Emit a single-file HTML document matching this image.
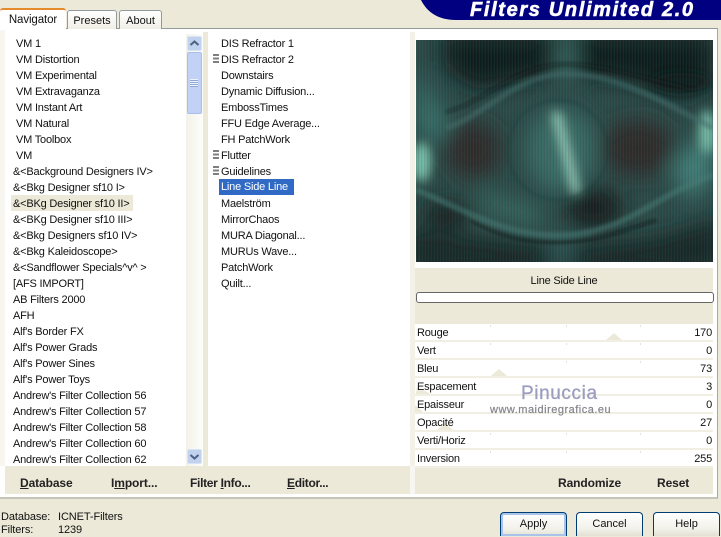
<!DOCTYPE html>
<html><head><meta charset="utf-8">
<style>
html,body{margin:0;padding:0}
body{width:721px;height:534px;position:relative;overflow:hidden;background:#ece9d8;font:11px "Liberation Sans",sans-serif;color:#111}
div{position:absolute;box-sizing:border-box}
.t{white-space:nowrap;line-height:16px;height:16px;letter-spacing:-.2px;margin-top:1px}
.b{font-weight:bold;font-size:12px;white-space:nowrap;line-height:16px;color:#222;margin-top:1px;letter-spacing:-.1px}
.row{left:415px;width:298px;height:16px;background:#fff}
.l{left:417px;line-height:16px;white-space:nowrap;margin-top:1px;letter-spacing:-.2px}
.v{right:9px;line-height:16px;text-align:right;margin-top:1px;letter-spacing:-.2px}
.tick{width:1px;height:2px;background:#e4e2d4}
.tri{width:0;height:0;border-left:8px solid transparent;border-right:8px solid transparent;border-bottom:7px solid #ece9d8}
.btn{height:24px;border:1px solid #003c74;border-radius:4px 4px 0 0;border-bottom:0;background:linear-gradient(#fff,#f2f1ea 70%,#e3e0d2);text-align:center;line-height:22px;font-size:11px}
.tab{border:1px solid #919b9c;border-bottom:0;border-radius:3px 3px 0 0;background:linear-gradient(#fff,#f0efe6);text-align:center;font-size:11px;line-height:20px}
.grip{left:213px;width:6px;height:9px;background:repeating-linear-gradient(#808080 0,#808080 2px,#fff 2px,#fff 3.5px)}
</style></head><body>

<svg style="position:absolute;left:400px;top:0" width="321" height="24"><path d="M21 0 C27 12 38 20 56 20 L321 20 L321 0 Z" fill="#000080"/></svg>
<div style="left:470px;top:-2px;font:italic bold 20px/24px 'Liberation Sans',sans-serif;color:#fff;letter-spacing:1.65px;white-space:nowrap;-webkit-text-stroke:.6px #fff">Filters Unlimited 2.0</div>

<div style="left:0;top:28px;width:718px;height:471px;background:#fff;border-top:1px solid #919b9c;border-right:1px solid #aca899;border-bottom:2px solid #c6c4b8"></div>

<div class="tab" style="left:67px;top:10px;width:50px;height:19px">Presets</div>
<div class="tab" style="left:119px;top:10px;width:43px;height:19px">About</div>
<div style="left:0;top:8px;width:66px;height:22px;background:#fff;border-top:2px solid #e68b2c;border-radius:3px 3px 0 0;text-align:center;font-size:11.5px;line-height:20px;letter-spacing:-.1px">Navigator</div>

<div style="left:0;top:30px;width:5px;height:436px;background:#f7f6f0"></div>
<div class="t" style="left:16px;top:35px">VM 1</div>
<div class="t" style="left:16px;top:51px">VM Distortion</div>
<div class="t" style="left:16px;top:67px">VM Experimental</div>
<div class="t" style="left:16px;top:83px">VM Extravaganza</div>
<div class="t" style="left:16px;top:99px">VM Instant Art</div>
<div class="t" style="left:16px;top:115px">VM Natural</div>
<div class="t" style="left:16px;top:131px">VM Toolbox</div>
<div class="t" style="left:16px;top:147px">VM</div>
<div class="t" style="left:13px;top:163px">&amp;&lt;Background Designers IV&gt;</div>
<div class="t" style="left:13px;top:179px">&amp;&lt;Bkg Designer sf10 I&gt;</div>
<div style="left:11px;top:195px;width:122px;height:16px;background:#ece9d8"></div>
<div class="t" style="left:13px;top:195px">&amp;&lt;BKg Designer sf10 II&gt;</div>
<div class="t" style="left:13px;top:211px">&amp;&lt;BKg Designer sf10 III&gt;</div>
<div class="t" style="left:13px;top:227px">&amp;&lt;Bkg Designers sf10 IV&gt;</div>
<div class="t" style="left:13px;top:243px">&amp;&lt;Bkg Kaleidoscope&gt;</div>
<div class="t" style="left:13px;top:259px">&amp;&lt;Sandflower Specials^v^ &gt;</div>
<div class="t" style="left:13px;top:275px">[AFS IMPORT]</div>
<div class="t" style="left:13px;top:291px">AB Filters 2000</div>
<div class="t" style="left:13px;top:307px">AFH</div>
<div class="t" style="left:13px;top:323px">Alf's Border FX</div>
<div class="t" style="left:13px;top:339px">Alf's Power Grads</div>
<div class="t" style="left:13px;top:355px">Alf's Power Sines</div>
<div class="t" style="left:13px;top:371px">Alf's Power Toys</div>
<div class="t" style="left:13px;top:387px">Andrew's Filter Collection 56</div>
<div class="t" style="left:13px;top:403px">Andrew's Filter Collection 57</div>
<div class="t" style="left:13px;top:419px">Andrew's Filter Collection 58</div>
<div class="t" style="left:13px;top:435px">Andrew's Filter Collection 60</div>
<div class="t" style="left:13px;top:451px">Andrew's Filter Collection 62</div>

<div style="left:186px;top:34px;width:17px;height:432px;background:linear-gradient(90deg,#f3f2ea,#fdfdfa)"></div>
<div style="left:203px;top:32px;width:5px;height:434px;background:#ece9d8"></div>
<div style="left:187px;top:36px;width:15px;height:15px;background:#c1d2ee;border:1px solid #d8e3f5;border-radius:2px"></div>
<svg style="position:absolute;left:187px;top:36px" width="15" height="15"><path d="M3.5 9 L7.5 5.5 L11.5 9" fill="none" stroke="#4d6185" stroke-width="2"/></svg>
<div style="left:187px;top:52px;width:15px;height:62px;background:#c1d2f6;border:1px solid #a9bfe6;border-radius:2px"></div>
<div style="left:190px;top:79px;width:8px;height:8px;background:repeating-linear-gradient(#eef3fc 0,#eef3fc 1px,#8fa8d8 1px,#8fa8d8 2px)"></div>
<div style="left:187px;top:449px;width:15px;height:15px;background:#c1d2ee;border:1px solid #d8e3f5;border-radius:2px"></div>
<svg style="position:absolute;left:187px;top:449px" width="15" height="15"><path d="M3.5 6 L7.5 9.5 L11.5 6" fill="none" stroke="#4d6185" stroke-width="2"/></svg>

<div class="t" style="left:221px;top:35px">DIS Refractor 1</div>
<div class="grip" style="top:54px"></div>
<div class="t" style="left:221px;top:51px">DIS Refractor 2</div>
<div class="t" style="left:221px;top:67px">Downstairs</div>
<div class="t" style="left:221px;top:83px">Dynamic Diffusion...</div>
<div class="t" style="left:221px;top:99px">EmbossTimes</div>
<div class="t" style="left:221px;top:115px">FFU Edge Average...</div>
<div class="t" style="left:221px;top:131px">FH PatchWork</div>
<div class="grip" style="top:150px"></div>
<div class="t" style="left:221px;top:147px">Flutter</div>
<div class="grip" style="top:166px"></div>
<div class="t" style="left:221px;top:163px">Guidelines</div>
<div style="left:219px;top:179px;width:75px;height:16px;background:#316ac5"></div>
<div class="t" style="left:221px;top:179px;color:#fff;margin-top:0;line-height:17px">Line Side Line</div>
<div class="t" style="left:221px;top:195px">Maelström</div>
<div class="t" style="left:221px;top:211px">MirrorChaos</div>
<div class="t" style="left:221px;top:227px">MURA Diagonal...</div>
<div class="t" style="left:221px;top:243px">MURUs Wave...</div>
<div class="t" style="left:221px;top:259px">PatchWork</div>
<div class="t" style="left:221px;top:275px">Quilt...</div>

<div style="left:410px;top:32px;width:5px;height:434px;background:#f4f2e8"></div>
<div style="left:5px;top:466px;width:405px;height:28px;background:#ece9d8"></div>
<div style="left:410px;top:466px;width:5px;height:28px;background:#f7f6f0"></div>

<svg style="position:absolute;left:416px;top:40px" width="297" height="222" viewBox="0 0 297 222">
<defs>
<filter id="a" x="-20%" y="-20%" width="140%" height="140%"><feGaussianBlur stdDeviation="10"/></filter>
<filter id="c" x="-20%" y="-20%" width="140%" height="140%"><feGaussianBlur stdDeviation="5"/></filter>
<filter id="d" x="-20%" y="-20%" width="140%" height="140%"><feGaussianBlur stdDeviation="1.5"/></filter>
<pattern id="p" width="3" height="4" patternUnits="userSpaceOnUse"><rect width="1" height="4" x="0" fill="#3f8c80" opacity=".12"/><rect width="1" height="4" x="2" fill="#4a2a2a" opacity=".14"/></pattern>
</defs>
<rect width="297" height="222" fill="#2b4a48"/>
<g filter="url(#a)">
<path d="M25 -5 L297 -5 L297 42 L270 60 L200 38 L130 36 L60 50 L30 30 Z" fill="#0d1a1a"/>
<ellipse cx="57" cy="110" rx="28" ry="28" fill="#2e2a29"/>
<ellipse cx="222" cy="108" rx="36" ry="28" fill="#2e2a29"/>
<ellipse cx="178" cy="168" rx="28" ry="20" fill="#191e1d"/>
<ellipse cx="30" cy="175" rx="24" ry="14" fill="#142222"/>
<path d="M-10 190 L-10 232 L307 232 L307 178 L240 198 L150 208 L60 198 Z" fill="#132626"/>
<ellipse cx="145" cy="110" rx="34" ry="42" fill="#3b6d68"/>
<ellipse cx="150" cy="18" rx="12" ry="26" fill="#34605c"/>
<ellipse cx="145" cy="212" rx="12" ry="18" fill="#2e5452"/>
<path d="M0 30 L35 85 L18 105 L0 90 Z" fill="#37706a"/>
<path d="M60 150 L125 168 L125 188 L70 172 Z" fill="#38685f"/>
<path d="M297 85 L255 125 L270 160 L297 140 Z" fill="#43807a"/>
</g>
<g filter="url(#c)">
<path d="M135 72 L145 72 L165 152 L156 155 Z" fill="#a4dcc8" opacity=".85"/>
<ellipse cx="6" cy="122" rx="9" ry="20" fill="#7cc4ae"/>
<ellipse cx="291" cy="92" rx="8" ry="22" fill="#79bfaa"/>
<ellipse cx="265" cy="42" rx="30" ry="9" fill="#0f1a1a"/>
</g>
<g filter="url(#d)" fill="none">
<path d="M30 88 C70 75 100 34 150 34 C200 34 240 58 297 88" stroke="#41706b" stroke-width="6" opacity=".55"/>
<path d="M30 72 C70 62 100 24 150 24 C190 24 240 42 280 50" stroke="#0d1a1a" stroke-width="3" opacity=".55"/>
<path d="M0 150 C50 170 90 198 150 195 C210 192 240 155 297 135" stroke="#477d76" stroke-width="6" opacity=".55"/>
<path d="M55 180 C90 200 120 204 160 201 C190 198 210 190 240 180" stroke="#0b1616" stroke-width="2.5" opacity=".7"/>
<circle cx="142" cy="110" r="50" stroke="#1c3634" stroke-width="1.5" opacity=".45"/>
</g>
<rect width="297" height="222" fill="url(#p)"/>
</svg>

<div style="left:415px;top:268px;width:298px;height:56px;background:#ece9d8"></div>
<div style="left:415px;top:273px;width:298px;text-align:center;line-height:16px;letter-spacing:-.2px">Line Side Line</div>
<div style="left:416px;top:292px;width:298px;height:11px;background:#fff;border:1px solid #666;border-radius:3px"></div>

<div style="left:415px;top:324px;width:298px;height:144px;background:#f1efe3"></div>
<div class="row" style="top:324px"></div>
<div class="row" style="top:342px"></div>
<div class="row" style="top:360px"></div>
<div class="row" style="top:378px"></div>
<div class="row" style="top:396px"></div>
<div class="row" style="top:414px"></div>
<div class="row" style="top:432px"></div>
<div class="row" style="top:450px"></div>

<div class="tri" style="left:606px;top:333px"></div>
<div class="tri" style="left:491px;top:369px"></div>
<div class="tri" style="left:416px;top:387px;border-left-width:1px;border-right-width:14px"></div>
<div class="tri" style="left:415px;top:405px;border-left-width:0;border-right-width:8px"></div>
<div class="tri" style="left:437px;top:423px"></div>

<div class="tick" style="left:490px;top:325px"></div><div class="tick" style="left:566px;top:325px"></div><div class="tick" style="left:640px;top:325px"></div>
<div class="tick" style="left:490px;top:343px"></div><div class="tick" style="left:566px;top:343px"></div><div class="tick" style="left:640px;top:343px"></div>
<div class="tick" style="left:566px;top:361px"></div><div class="tick" style="left:640px;top:361px"></div>
<div class="tick" style="left:490px;top:433px"></div><div class="tick" style="left:566px;top:433px"></div><div class="tick" style="left:640px;top:433px"></div>
<div class="tick" style="left:490px;top:451px"></div><div class="tick" style="left:566px;top:451px"></div><div class="tick" style="left:640px;top:451px"></div>

<div class="l" style="top:324px">Rouge</div><div class="v" style="top:324px">170</div>
<div class="l" style="top:342px">Vert</div><div class="v" style="top:342px">0</div>
<div class="l" style="top:360px">Bleu</div><div class="v" style="top:360px">73</div>
<div class="l" style="top:378px">Espacement</div><div class="v" style="top:378px">3</div>
<div class="l" style="top:396px">Epaisseur</div><div class="v" style="top:396px">0</div>
<div class="l" style="top:414px">Opacité</div><div class="v" style="top:414px">27</div>
<div class="l" style="top:432px">Verti/Horiz</div><div class="v" style="top:432px">0</div>
<div class="l" style="top:450px">Inversion</div><div class="v" style="top:450px">255</div>

<div style="left:521px;top:383px;font-size:19px;line-height:22px;color:#9c9cc0;letter-spacing:.6px;white-space:nowrap;-webkit-text-stroke:.3px #9c9cc0">Pinuccia</div>
<div style="left:490px;top:404px;font-size:11px;line-height:13px;color:#84848c;letter-spacing:.5px;white-space:nowrap;-webkit-text-stroke:.2px #84848c">www.maidiregrafica.eu</div>

<div style="left:415px;top:468px;width:298px;height:26px;background:#ece9d8"></div>
<div class="b" style="left:558px;top:474px">Randomize</div>
<div class="b" style="left:657px;top:474px">Reset</div>

<div class="b" style="left:20px;top:474px"><u>D</u>atabase</div>
<div class="b" style="left:111px;top:474px">I<u>m</u>port...</div>
<div class="b" style="left:190px;top:474px;letter-spacing:-.3px">Filter <u>I</u>nfo...</div>
<div class="b" style="left:287px;top:474px;letter-spacing:-.3px"><u>E</u>ditor...</div>

<div style="left:1px;top:510px;line-height:14px;white-space:nowrap;letter-spacing:-.1px">Database:</div>
<div style="left:58px;top:510px;line-height:14px;white-space:nowrap;letter-spacing:-.1px">ICNET-Filters</div>
<div style="left:1px;top:523px;line-height:14px;white-space:nowrap;letter-spacing:-.1px">Filters:</div>
<div style="left:58px;top:523px;line-height:14px;white-space:nowrap;letter-spacing:-.1px">1239</div>

<div class="btn" style="left:500px;top:512px;width:67px;box-shadow:inset 0 0 0 2px #a9c4ea">Apply</div>
<div class="btn" style="left:576px;top:512px;width:67px">Cancel</div>
<div class="btn" style="left:653px;top:512px;width:67px">Help</div>
</body></html>
